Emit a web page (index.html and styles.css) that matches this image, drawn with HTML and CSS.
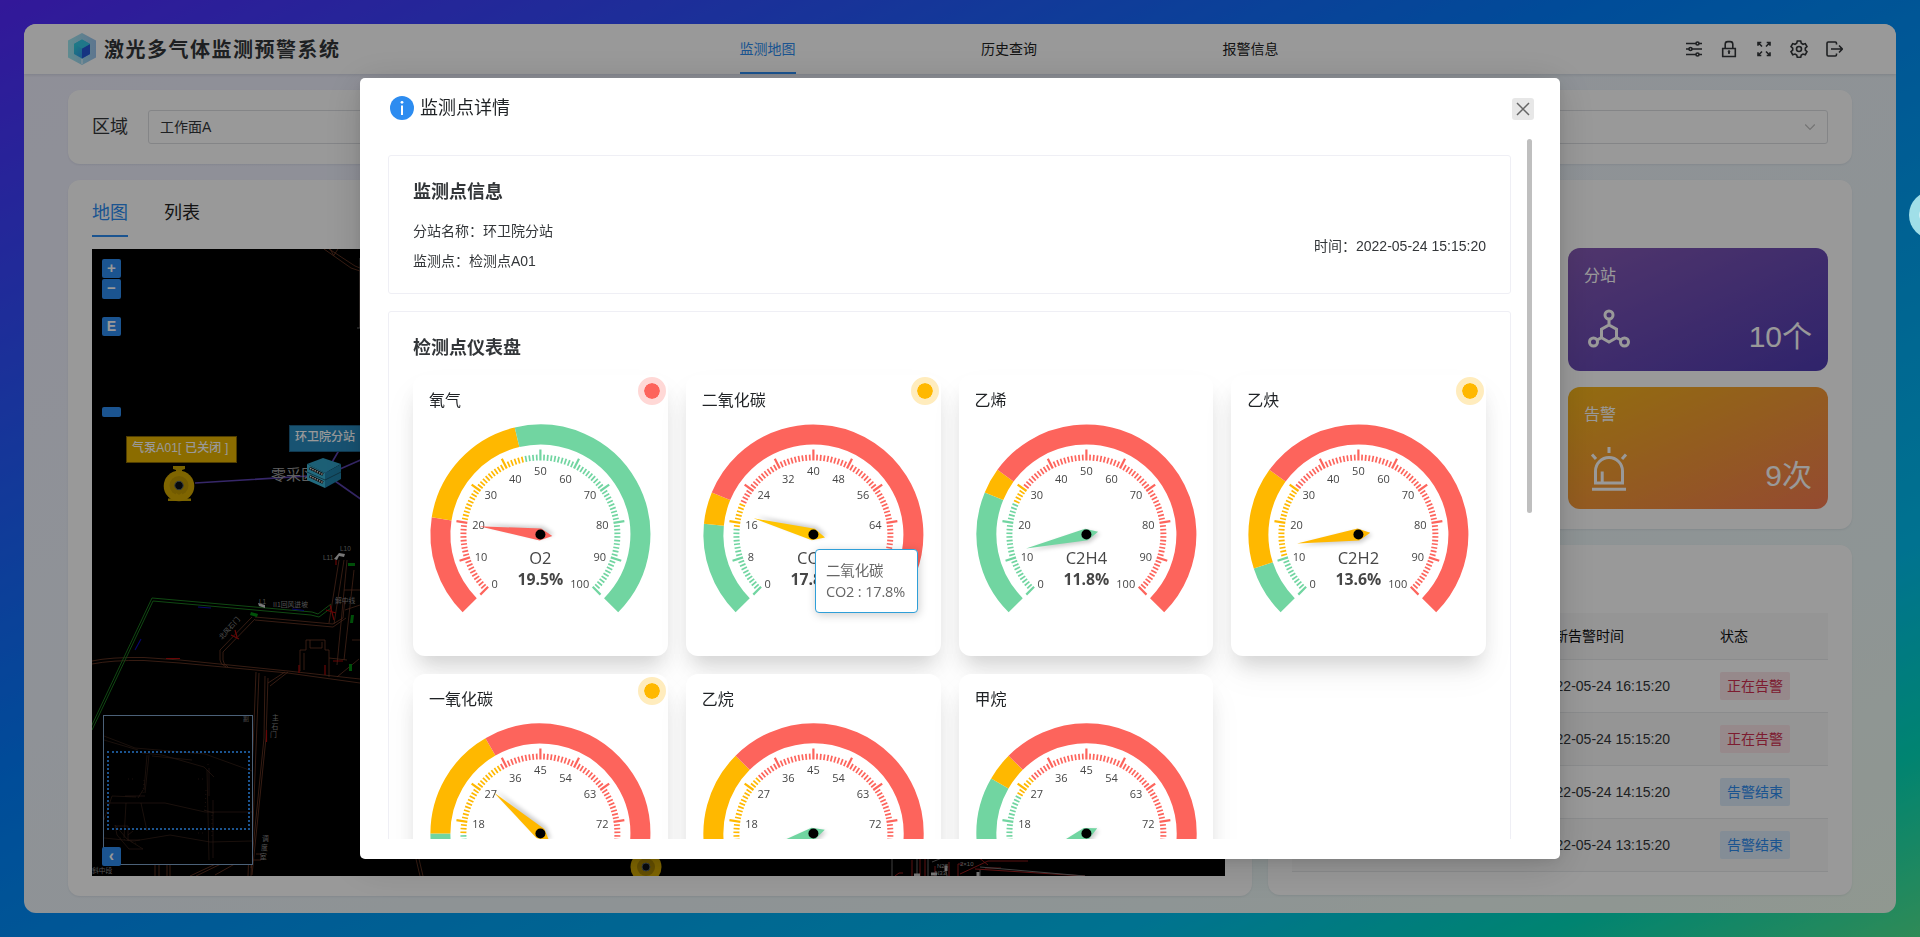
FILE: index.html
```html
<!DOCTYPE html>
<html lang="zh-CN">
<head>
<meta charset="utf-8">
<title>激光多气体监测预警系统</title>
<link rel="stylesheet" href="styles.css">
</head>
<body>
<div class="app">
  <header class="header">
    <div class="brand">
      <svg class="logo" viewBox="0 0 28 32">
        <defs>
          <linearGradient id="lg1" x1="0" y1="0" x2="1" y2="0"><stop offset="0" stop-color="#9fe9f0"/><stop offset="1" stop-color="#9cc4ee"/></linearGradient>
          <linearGradient id="lg2" x1="0" y1="0" x2="1" y2="1"><stop offset="0" stop-color="#2fe0d8"/><stop offset="1" stop-color="#2f7df0"/></linearGradient>
        </defs>
        <path fill="url(#lg1)" d="M14 0 28 7.500v17L14 32 0 24.500v-17z"/>
        <path fill="url(#lg2)" d="M14 6.500 22 11v10l-8 4.500L6 21V11z"/>
        <path fill="#2558d8" d="M14 15.500 22 11v10l-8 4.500z"/>
        <path fill="#35c6e4" d="M14 6.500 22 11l-8 4.500L6 11z"/>
        <path stroke="#d5eefa" stroke-width="1.500" d="M14 26v5"/>
      </svg>
      <h1 class="brand-name">激光多气体监测预警系统</h1>
    </div>
    <nav class="nav">
      <a class="nav-item active">监测地图</a>
      <a class="nav-item">历史查询</a>
      <a class="nav-item">报警信息</a>
    </nav>
    <div class="tools">
      <svg viewBox="0 0 18 18"><path d="M1 3.500h10M14 3.500h3M1 9h3M7 9h10M1 14.500h10M14 14.500h3"/><circle cx="12.500" cy="3.500" r="1.500"/><circle cx="5.500" cy="9" r="1.500"/><circle cx="12.500" cy="14.500" r="1.500"/></svg>
      <svg viewBox="0 0 18 18"><path d="M2.700 8.500h12.600v8H2.700zM5.200 8.500V4.200a2.600 2.600 0 0 1 2.600-2.600h2.400a2.600 2.600 0 0 1 2.600 2.600v4.300M9 11.500v2.500"/><circle cx="9" cy="11.600" r=".5"/></svg>
      <svg viewBox="0 0 18 18"><path d="M3 5.800V2.500h3.300M3.300 2.800 7 6.500M11.700 2.500H15v3.300M14.700 2.800 11 6.500M3 12.200v3.300h3.300M3.300 15.200 7 11.500M15 12.200v3.300h-3.300M14.700 15.200 11 11.500"/></svg>
      <svg viewBox="0 0 18 18"><path d="M7.300 1h3.400l.6 2.300 1.700 1 2.300-.7 1.700 3-1.700 1.600v1.900l1.700 1.600-1.700 3-2.300-.7-1.700 1-.6 2.300H7.300l-.6-2.300-1.700-1-2.300.7-1.700-3 1.700-1.600V8.200L1 6.600l1.700-3 2.300.7 1.700-1z"/><circle cx="9" cy="9" r="2.500"/></svg>
      <svg viewBox="0 0 18 18"><path d="M11.500 4.500V3.200A1.200 1.200 0 0 0 10.300 2H3.200A1.200 1.200 0 0 0 2 3.200v11.600A1.200 1.200 0 0 0 3.200 16h7.100a1.200 1.200 0 0 0 1.200-1.200v-1.300M6 9h11M14 5.500 17.300 9 14 12.500"/></svg>
    </div>
  </header>

  <main class="content">
    <section class="card filter">
      <label class="filter-label">区域</label>
      <div class="select"><span>工作面A</span>
        <svg viewBox="0 0 12 12"><path d="M1.200 3.500 6 8.500l4.800-5"/></svg>
      </div>
    </section>
    <div class="columns">
      <section class="card map-card">
        <div class="tabs"><span class="tab active">地图</span><span class="tab">列表</span></div>
        <div class="map">
          <svg class="map-drawing" viewBox="92 249 1133 627">
            <g class="road">
              <path d="M324 249l27 19 9 3v57M329 249l26 17 5 2M330 249l4 7M338 249l-4 6"/>
              <path d="M92 661q18-4 52-3.500L180 660l108 11 72 8M92 664q20-4 52-3.500L180 663l108 10 72 10"/>
              <path d="M252 617l-32 33v10q0 4 6 7M255 619l-32 33v8q0 4 5 7M255 617l78 7 10-6 2-20M255 620l78 7 13-9"/>
              <path d="M256 672l-8 204M259 673l-8 203M268 678l-2 60-14 137M265 676l-1 62-13 130M268 683l17-11M270 686l18-14"/>
              <path d="M329 623l10-63M334 624l10-64M300 671v-21h6v-10h19v10h4v27M304 670v-17M310 640v8h12v-6M329 658l18 2M337 677l22-18M347 560l-10 105M354 570l-10 90M344 590h16M345 610l15-5M352 640h8"/>
              <path d="M252 860h9v-6h-5M155 860v16M159 860v16M167 860v16M170 860v16M220 862l-30 14M225 862l-29 14M240 861l-25 14M416 859l4 17M419 859l4 17"/>
            </g>
            <path class="cave" d="M360 258v70h-3"/>
            <g class="green-line"><path d="M91 727 152 598l160 14 6 2 13-10M92 730 153 601l158 14 8 2 12-9"/></g>
            <g class="green-block"><path d="M251 612l7 2-1 3-7-2zM351 615h3l-1 8h-3zM349 664h3v7h-3zM348 563h7v3h-7z"/></g>
            <g class="blue-arrow"><path d="M198 607l13 1M292 609l12 1.500M135 650l6-11"/></g>
            <g class="red-mark"><path d="M166 658.500h14M266.500 730v12M330 605l4 15M326 610l10 3M299 665v8M325 665v10M333 661h10M231 635l8 4M235 630l2 7M336 560v5"/></g>
            <g class="cad-text">
              <text x="273" y="607">II1回风进坡</text>
              <text x="335" y="603">解中线</text>
              <text x="222" y="640" transform="rotate(-48 222 640)">北风石门</text>
              <text x="272" y="720">主</text><text x="271.500" y="728.500">石</text><text x="270" y="737">门</text>
              <text x="262" y="841">调</text><text x="261" y="850">度</text><text x="260" y="859">室</text>
              <text class="wide" x="92" y="873">斜中段</text>
              <text class="lat" x="340" y="551">L10</text><text class="lat" x="323" y="560">L11</text><text class="lat" x="259" y="604">L1</text>
            </g>
            <path class="cad-white" d="M258 603l7 2v3l-6-2zM339 553l6 1-1 3-5-1-2 4-3-1z"/>
            <g class="link"><path d="M195 483 324 475M324 476 345 440M324 476 372 455M335 481 372 507"/></g>
            <text class="zone" x="271" y="480">零采区</text>
            <g>
              <path fill="#c9a400" d="M173 466h12v3l-3 1v3h-6v-3l-3-1zM168 498.500h23v2.500h-23z"/>
              <circle cx="179" cy="486" r="15.300" fill="#d4a900"/><circle cx="179" cy="485.500" r="9.500" fill="#c09800"/>
              <circle cx="179" cy="485.500" r="4.200" fill="#0b0f16" stroke="#59656b"/>
              <path fill="#d4a900" d="M176 493l3 2 3-2v6h-6z"/>
            </g>
            <g>
              <path fill="#2f9ec4" d="M307 464 323 458 341 464 325 473z"/>
              <path fill="#3ab3d4" d="M307 464 325 473v15l-18-8z"/>
              <path fill="#1f83ab" d="M325 473 341 464v15l-16 9z"/>
              <path stroke="#17495a" stroke-width=".8" d="M307 472l18 8 16-8"/>
              <path stroke="#111" stroke-width="3" d="M309.500 468l13.500 6.500M309.500 476l13.500 6.500"/>
              <path stroke="#ddd" stroke-width="1.500" stroke-dasharray="1.500 1" d="M310 468.300l12.500 6M310 476.300l12.500 6"/>
            </g>
            <g>
              <circle cx="646" cy="867" r="15.500" fill="#d4a900"/><circle cx="646" cy="867" r="9" fill="#a98500"/>
              <circle cx="646" cy="867" r="4" fill="#0b0f16" stroke="#59656b"/>
            </g>
            <g class="mine-cluster">
              <path stroke="#a82020" d="M895 876l4-3h4M912 860v16M920 858v18M925 859v17M935 866v10M949 862v14M958 876v-12h5M960 874l28-13h40M978 857l10 8M985 868h16M975 869l110 7"/>
              <path stroke="#777" d="M892 859v17M917 859v17M928 859v17M932 862l10-4M980 867l105 9M945 865l2 11M980 870v6"/>
              <path stroke="#ccc" stroke-width="3" d="M914 875h6M931 874h6M978 872v5M946 866v5"/>
              <text x="937" y="868">N28</text><text x="935" y="875">N33</text><text x="960" y="866">2×10</text>
            </g>
          </svg>
          <div class="map-ctl zoom-in">+</div>
          <div class="map-ctl zoom-out">−</div>
          <div class="map-ctl extent">E</div>
          <div class="map-ctl slider"></div>
          <div class="marker pump">气泵A01[ 已关闭 ]</div>
          <div class="marker station">环卫院分站</div>
          <div class="overview">
            <svg viewBox="104 716 148 148">
              <g class="ov-lines">
                <path stroke="#444c48" d="M104 736l31 12 70 6 47 17"/>
                <path d="M104 740l34 10M142 753l20 2 42 12 10 10M152 756l40 4M105 803h60l40 9h47M104 838l30 3 36-6 40 7 42-1M147 755l-3 35M149 755l-4 38M143 790l-5 8M126 803l-2 35M141 803l6 28M209 768v28M207 770l2 90M213 800v58M204 810l10 3M125 796h20M115 825l12 14 16 10h-14l-12-14zM116 826h12v14h12"/>
                <path stroke="#174817" d="M104 820l8-24 24 1M128 835l5-4"/>
                <path stroke="#888" stroke-dasharray="1 3" d="M144 780l-1 14M208 764v3M206 790l-1 22M212 815v24M120 838l18 6M128 779h6M198 779h6M198 833h6"/>
              </g>
              <text x="243" y="721">副</text>
            </svg>
            <div class="ov-frame"></div>
          </div>
          <div class="map-ctl fold">‹</div>
        </div>
      </section>
      <div class="side">
        <section class="card stats">
          <div class="stat stat-station">
            <span class="stat-name">分站</span>
            <div class="stat-row">
              <svg viewBox="0 0 44 44"><circle cx="22" cy="7" r="4"/><circle cx="6.500" cy="34" r="4"/><circle cx="37.500" cy="34" r="4"/><path d="M22 17l7.500 4.200v8.500L22 34l-7.500-4.300v-8.500zM22 11v6M14.500 29.700 10 32M29.500 29.700 34 32"/></svg>
              <b>10个</b>
            </div>
          </div>
          <div class="stat stat-alarm">
            <span class="stat-name">告警</span>
            <div class="stat-row">
              <svg viewBox="0 0 44 44"><path d="M8.500 36V24a13.500 13.500 0 0 1 27 0v12zM15.200 24.500V35M5 42.300h34M22 0v6M5 7.500l4 4.500M39 7.500 35 12"/></svg>
              <b>9次</b>
            </div>
          </div>
        </section>
        <section class="card alarms">
          <table class="table">
            <thead><tr><th>最新告警时间</th><th>状态</th></tr></thead>
            <tbody>
              <tr><td>2022-05-24 16:15:20</td><td><span class="tag on">正在告警</span></td></tr>
              <tr><td>2022-05-24 15:15:20</td><td><span class="tag on">正在告警</span></td></tr>
              <tr><td>2022-05-24 14:15:20</td><td><span class="tag off">告警结束</span></td></tr>
              <tr><td>2022-05-24 13:15:20</td><td><span class="tag off">告警结束</span></td></tr>
            </tbody>
          </table>
        </section>
      </div>
    </div>
  </main>
</div>

<div class="mask">
  <div class="modal">
    <div class="modal-head">
      <svg class="info" viewBox="0 0 24 24"><circle cx="12" cy="12" r="12" fill="#2d8cf0"/><path stroke="#fff" stroke-width="2" d="M12 9.500V19"/><circle cx="12" cy="6.300" r="1.400" fill="#fff"/></svg>
      <span class="modal-title">监测点详情</span>
      <span class="close"><svg viewBox="0 0 22 22"><path d="M5 5l12 12M17 5 5 17"/></svg></span>
    </div>
    <div class="modal-body">
      <section class="panel point">
        <h2>监测点信息</h2>
        <div class="point-row">
          <div class="point-lines"><p>分站名称：环卫院分站</p><p>监测点：检测点A01</p></div>
          <p>时间：2022-05-24 15:15:20</p>
        </div>
      </section>
      <section class="panel dials">
        <h2>检测点仪表盘</h2>
        <div class="grid" id="grid"></div>
      </section>
    </div>
    <div class="scrollbar"></div>
    <div class="tooltip">二氧化碳<br>CO2 : 17.8%</div>
  </div>
</div>
<div class="float-ball"></div>
<script src="gauges.js"></script>
</body>
</html>
```
FILE: styles.css
```css
* { box-sizing: border-box; }
body {
  margin: 0; height: 937px; overflow: hidden; padding: 24px; color: #333639;
  font: 14px/1.6 "Liberation Sans", "Noto Sans CJK SC", sans-serif;
  background: linear-gradient(to bottom right, #5528ff 0%, #0080ff 42%, #00a3f5 62%, #00bff0 79%, #00dcbd 90%, #4fe891 100%);
}
h1, h2, p { margin: 0; }
.app { height: 889px; border-radius: 12px; background: linear-gradient(to bottom right, #efeffe, #eef4fc 40%, #edf5f9 60%, #edf8f8 80%, #f0fdf1); overflow: hidden; display: flex; flex-direction: column; }
.header { height: 50px; flex: none; background: #fff; padding: 0 44px; display: grid; grid-template-columns: 672px 1fr auto; align-items: center; box-shadow: 0 1px 3px rgba(0,21,41,.12); }
.brand { display: flex; align-items: center; gap: 8px; }
.logo { width: 28px; height: 32px; }
.brand-name { font-size: 20px; letter-spacing: 1.500px; line-height: 48px; padding-top: 2px; font-weight: 700; }
.nav { display: flex; gap: 185.500px; margin-left: -.5px; }
.nav-item { height: 50px; line-height: 50px; color: #222; }
.nav-item.active { color: #2d8cf0; border-bottom: 2px solid #2d8cf0; }
.tools { display: flex; gap: 17px; margin-right: 9px; }
.tools svg { width: 18px; height: 18px; fill: none; stroke: #333639; stroke-width: 1.600; }
.content { flex: 1; padding: 16px 44px; display: flex; flex-direction: column; gap: 16px; }
.card { background: #fff; border-radius: 12px; box-shadow: 0 1px 2px rgba(0,20,60,.08); }
.filter { height: 74px; flex: none; padding: 0 24px; display: flex; align-items: center; gap: 20px; }
.filter-label { font-size: 18px; }
.select { flex: 1; height: 34px; border: 1px solid #dcdee2; border-radius: 3px; display: flex; align-items: center; justify-content: space-between; padding: 0 11px; }
.select svg { width: 12px; height: 12px; fill: none; stroke: #c2c2c2; stroke-width: 1.200; }
.columns { display: flex; gap: 16px; height: 716px; }
.map-card { width: 1184px; padding: 14px 24px 20px; }
.tabs { display: flex; gap: 36px; font-size: 18px; height: 43px; }
.tab { line-height: 38px; height: 43px; color: #222; }
.tab.active { color: #2d8cf0; border-bottom: 2px solid #2d8cf0; }
.map { position: relative; margin-top: 12px; width: 1133px; height: 627px; background: #000; overflow: hidden; }
.map-drawing { display: block; width: 1133px; height: 627px; fill: none; }
.road path { stroke: #743c28; stroke-width: .8; }
.cave { stroke: #777; }
.green-line path { stroke: #1b7a1f; stroke-width: 1; }
.green-block path { fill: #008a10; }
.blue-arrow path { stroke: #0d0db0; stroke-width: 1.200; }
.red-mark path { stroke: #b00a0a; stroke-width: 1.200; }
.cad-text text { fill: #8a8a8a; font: 6.800px "Noto Sans CJK SC", sans-serif; }
.cad-text .lat { font: 6.500px "Liberation Sans", sans-serif; }
.cad-white { fill: #ccc; }
.link path { stroke: #5b42b0; stroke-width: 1.600; }
.zone { fill: #a0a0a0; font: 15px "Noto Sans CJK SC", sans-serif; }
.mine-cluster text { fill: #aaa; font: 6px "Liberation Sans", sans-serif; }
.map-ctl { position: absolute; left: 10px; width: 19px; height: 19px; border-radius: 2px; background: #2d8cf0; color: #fff; font-weight: 700; font-size: 15px; line-height: 18px; text-align: center; }
.zoom-in { top: 10px; }
.zoom-out { top: 30px; height: 20px; }
.extent { top: 68px; font-size: 14px; }
.slider { top: 158px; height: 10px; }
.fold { top: 598px; font-size: 16px; }
.marker { position: absolute; height: 27px; line-height: 22px; padding: 0 5px; color: #fff; font-size: 12px; font-weight: 500; white-space: nowrap; }
.pump { left: 34px; top: 187px; width: 111px; background: #e8b400; border: 1px solid #856700; letter-spacing: .15px; }
.station { left: 197px; top: 176px; background: #288abf; border: 1px solid #1d5f85; }
.overview { position: absolute; left: 11px; top: 466px; width: 150px; height: 150px; border: 1px solid #7ea2c8; background: #000; }
.overview svg { width: 148px; height: 148px; fill: none; display: block; }
.ov-lines path { stroke: #4a2d22; stroke-width: .6; }
.overview text { fill: #777; font: 6px "Noto Sans CJK SC", sans-serif; }
.ov-frame { position: absolute; left: 3px; top: 35px; width: 143px; height: 79px; border: 2px dotted #2d8cf0; }
.side { width: 584px; display: flex; flex-direction: column; gap: 16px; }
.stats { height: 349px; padding: 68px 24px 0; display: flex; flex-direction: column; align-items: flex-end; gap: 16px; }
.stat { width: 260px; height: 122.500px; border-radius: 12px; color: #fff; padding: 15px 16px 0; }
.stat-station { background: linear-gradient(155deg, #865ab5, #4f3bb3); }
.stat-alarm { background: linear-gradient(155deg, #f5b51a, #f77c52); }
.stat-name { font-size: 16px; line-height: 26px; display: block; }
.stat-row { display: flex; justify-content: space-between; align-items: center; height: 54px; margin-top: 14px; }
.stat-row svg { width: 44px; height: 44px; margin-left: 3px; fill: none; stroke: #fff; stroke-width: 3; }
.stat-row b { font-size: 30px; font-weight: 400; line-height: 40px; margin-top: 14px; }
.alarms { height: 350px; padding: 68px 24px 0; }
.table { border-collapse: collapse; width: 536px; }
.table th, .table td { height: 53px; padding: 0 0 0 12px; text-align: left; border-bottom: 1px solid #e8eaec; font-weight: 400; }
.table th { height: 46.500px; background: #f8f8f9; color: #111; }
.table th:first-child, .table td:first-child { padding-left: 248px; width: 416px; }
.table tbody tr:nth-child(even) { background: #f9f9f9; }
.tag { display: inline-block; height: 28px; line-height: 28px; padding: 0 7px; border-radius: 2px; vertical-align: middle; }
.on { color: #d03050; background: #fbe4e8; }
.off { color: #2d8cf0; background: #dcebfb; }

.mask { position: fixed; inset: 0; background: rgba(0,0,0,.4); display: flex; justify-content: center; align-items: flex-start; padding-top: 78px; }
.modal { position: relative; width: 1200px; height: 780.500px; background: #fff; border-radius: 5px; padding: 0 49px 0 28px; box-shadow: 0 6px 40px rgba(0,0,0,.16), 0 3px 12px rgba(0,0,0,.08); }
.modal-head { display: flex; align-items: center; gap: 6px; height: 60px; padding-left: 2px; margin-right: -23px; }
.info { width: 24px; height: 24px; }
.modal-title { font-size: 18px; color: #1f2225; }
.close { margin-left: auto; margin-top: 2px; width: 22px; height: 22px; background: #e7e7e7; border-radius: 3px; }
.close svg { display: block; width: 22px; height: 22px; fill: none; stroke: #666; stroke-width: 1.500; }
.modal-body { height: 701px; padding-top: 17px; overflow: hidden; display: flex; flex-direction: column; gap: 17px; }
.panel { flex: none; border: 1px solid #efeff5; border-radius: 3px; padding: 0 24px; }
.panel h2 { font-size: 18px; line-height: 30px; }
.point { height: 138.500px; padding-top: 21px; }
.point-row { display: flex; justify-content: space-between; align-items: center; margin-top: 9px; }
.point-lines p { line-height: 30px; }
.dials { height: 700px; padding-top: 21px; }
.grid { display: grid; grid-template-columns: repeat(4, 1fr); gap: 18px; margin-top: 12px; }
.gauge-card { position: relative; height: 281.500px; background: #fff; border-radius: 12px; box-shadow: 0 14px 20px -6px rgba(0,0,0,.14), 0 18px 34px rgba(0,0,0,.05); }
.gauge-name { position: absolute; left: 16px; top: 13px; font-size: 16px; color: #1f2225; }
.lamp { position: absolute; right: 2px; top: 2.500px; width: 28px; height: 28px; border-radius: 50%; border: 6px solid; background-clip: padding-box; }
.lamp.red { background-color: #fd645c; border-color: #ffd8d6; }
.lamp.yellow { background-color: #ffb800; border-color: #ffecbd; }
.gauge { display: block; width: 100%; height: 281.500px; font-family: "Open Sans", sans-serif; fill: #464646; }
.scale { font-size: 11px; }
.formula { font-size: 16.500px; }
.reading { font-size: 15.800px; font-weight: 700; }
.scrollbar { position: absolute; left: 1167px; top: 61px; width: 5px; height: 374px; border-radius: 3px; background: #bfbfbf; }
.tooltip { position: absolute; left: 455px; top: 471px; width: 103px; height: 64px; border: 1px solid #2f9fd8; border-radius: 4px; background: #fff; color: #666; padding: 10px 10px; line-height: 21px; font-family: "Open Sans", "Noto Sans CJK SC", sans-serif; font-size: 14.500px; letter-spacing: -.15px; white-space: nowrap; box-shadow: 1px 2px 10px rgba(0,0,0,.2); }
.float-ball { position: fixed; left: 1909px; top: 191px; width: 48px; height: 48px; border-radius: 50%; background: radial-gradient(circle, #fff 0 13px, #a0dfe8 14px); }
```
FILE: gauges.js
```js
const RED = '#fd645c', YELLOW = '#ffb800', GREEN = '#71d5a1';
const gauges = [
  { name: '氧气', f: 'O2', v: 19.5, max: 100, lamp: 'red', bands: [[.2, RED], [.45, YELLOW], [1, GREEN]], needle: RED },
  { name: '二氧化碳', f: 'CO2', v: 17.8, max: 80, lamp: 'yellow', bands: [[.1875, GREEN], [.25, YELLOW], [1, RED]], needle: '#ffc400' },
  { name: '乙烯', f: 'C2H4', v: 11.8, max: 100, bands: [[.25, GREEN], [.3, YELLOW], [1, RED]], needle: GREEN },
  { name: '乙炔', f: 'C2H2', v: 13.6, max: 100, lamp: 'yellow', bands: [[.1, GREEN], [.3, YELLOW], [1, RED]], needle: YELLOW },
  { name: '一氧化碳', f: 'CO', v: 28.8, max: 90, lamp: 'yellow', bands: [[.1667, GREEN], [.389, YELLOW], [1, RED]], needle: YELLOW },
  { name: '乙烷', f: 'C2H6', v: 8.8, max: 90, bands: [[.111, GREEN], [.3333, YELLOW], [1, RED]], needle: GREEN },
  { name: '甲烷', f: 'CH4', v: 6.3, max: 90, bands: [[.2778, GREEN], [.3333, YELLOW], [1, RED]], needle: GREEN }
];
const CX = 127.4, CY = 159.5;
const point = (t, r) => {
  const a = (225 - 270 * t) * Math.PI / 180;
  return [(CX + r * Math.cos(a)).toFixed(2), (CY - r * Math.sin(a)).toFixed(2)];
};
function draw(g) {
  let s = '', from = 0;
  for (const [to, color] of g.bands) {
    const big = to - from > 2 / 3 ? 1 : 0;
    s += `<path fill="none" stroke="${color}" stroke-width="20" d="M${point(from, 100)}A100 100 0 ${big} 1 ${point(to, 100)}"/>`;
    from = to;
  }
  for (let i = 0; i <= 100; i++) {
    const t = i / 100, color = g.bands.find(b => t <= b[0] + 1e-6)[1], major = i % 10 === 0;
    s += `<path stroke="${color}" stroke-width="${major ? 2.2 : 1.7}" d="M${point(t, 74)}L${point(t, major ? 85 : 80)}"/>`;
  }
  for (let i = 0; i <= 10; i++) {
    const [x, y] = point(i / 10, 69);
    const a = (225 - 27 * i) * Math.PI / 180, c = Math.cos(a), n = Math.sin(a);
    const anchor = c < -.4 ? 'start' : c > .4 ? 'end' : 'middle';
    s += `<text class="scale" x="${x}" y="${+y + (n > .8 ? 9.5 : 4.8)}" text-anchor="${anchor}">${Math.round(g.max * i / 10)}</text>`;
  }
  s += `<text class="formula" x="${CX}" y="${CY + 29}" text-anchor="middle">${g.f}</text>`;
  s += `<text class="reading" x="${CX}" y="${CY + 50.5}" text-anchor="middle">${g.v}%</text>`;
  const t = g.v / g.max, turn = 270 * t - 225, dy = t > 1 / 6 ? -2 : 2;
  const shape = `<path transform="translate(${CX} ${CY}) rotate(${turn})" d="M-12 0L0 -6L62 0L0 6Z" `;
  s += `<g transform="translate(2 ${dy})">${shape} fill="#000" opacity=".2" style="filter:blur(2px)"/></g>`;
  s += `${shape} fill="${g.needle}"/><circle cx="${CX}" cy="${CY}" r="5" fill="#000"/>`;
  return `<div class="gauge-card"><svg class="gauge" viewBox="0 0 254.75 281.5">${s}</svg>` +
    `<span class="gauge-name">${g.name}</span>${g.lamp ? `<i class="lamp ${g.lamp}"></i>` : ''}</div>`;
}
document.getElementById('grid').innerHTML = gauges.map(draw).join('');
```
